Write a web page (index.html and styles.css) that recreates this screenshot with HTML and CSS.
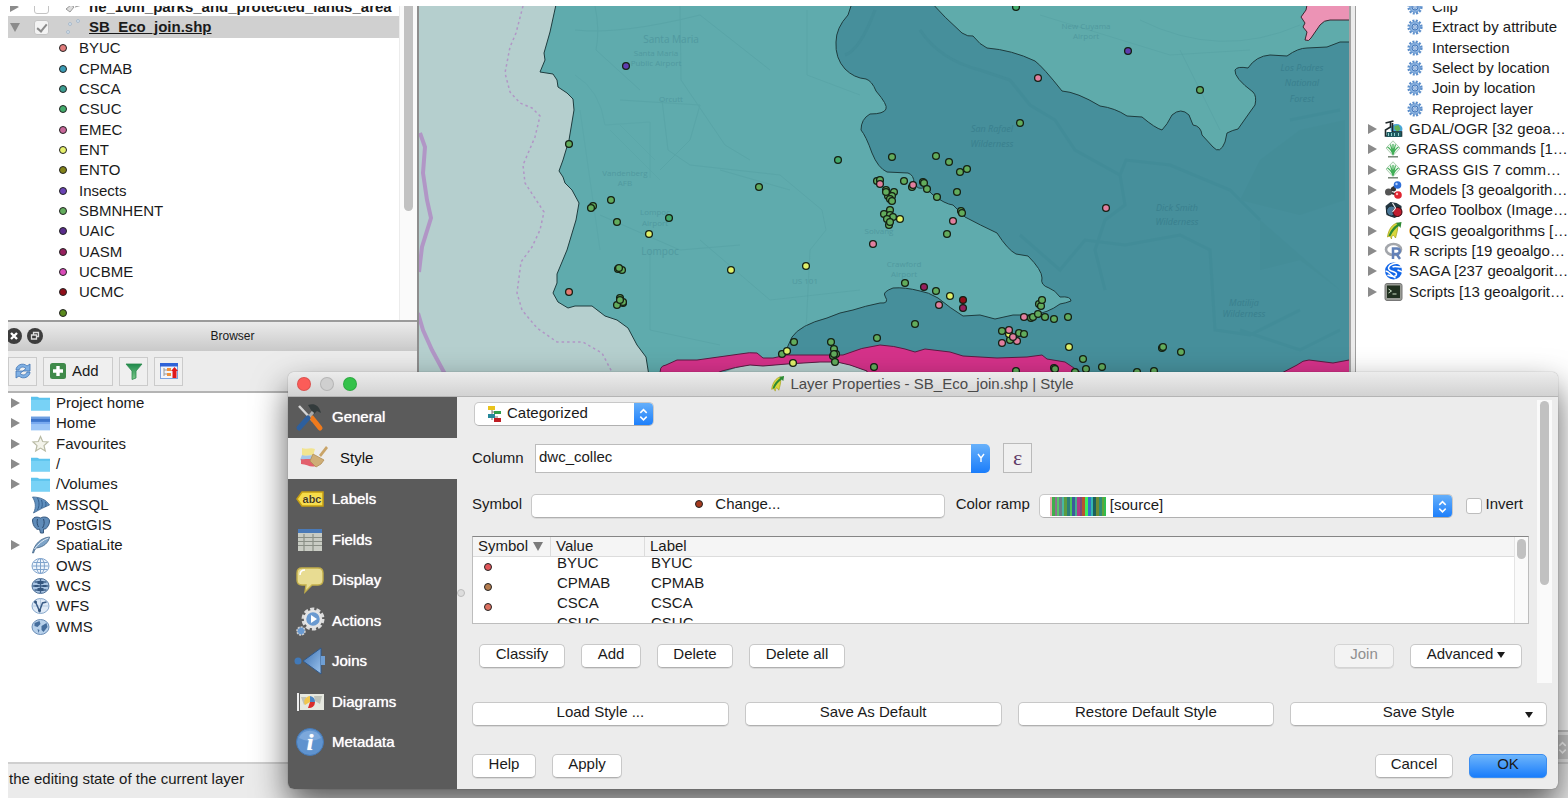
FILE: index.html
```html
<!DOCTYPE html>
<html lang="en">
<head>
<meta charset="utf-8">
<title>QGIS</title>
<link rel="stylesheet" href="styles.css">
</head>
<body>
<svg class="defs" aria-hidden="true">
  <defs>
    <linearGradient id="gGreen" x1="0" y1="0" x2="0" y2="1"><stop offset="0" stop-color="#1f8a4c"/><stop offset="1" stop-color="#7cc88a"/></linearGradient>
    <linearGradient id="gBlue" x1="0" y1="0" x2="1" y2="1"><stop offset="0" stop-color="#3a6fb0"/><stop offset="1" stop-color="#9cc4ee"/></linearGradient>
    <symbol id="folder" viewBox="0 0 18 16"><path d="M0 2h6l2 1h10v12H0z" fill="#5cc3ee"/><path d="M0 5h18v10H0z" fill="#78d2f6"/></symbol>
    <symbol id="gear" viewBox="0 0 16 16"><circle cx="8" cy="8" r="6.4" fill="none" stroke="#5d8fcb" stroke-width="2.400" stroke-dasharray="2 1.350"/><circle cx="8" cy="8" r="5.300" fill="#8db4e0" stroke="#5d8fcb" stroke-width=".8"/><circle cx="8" cy="8" r="3" fill="#b5cfee" stroke="#4577ba"/><circle cx="8" cy="8" r="1.300" fill="#e8f1fb" stroke="#4577ba" stroke-width=".6"/></symbol>
    <symbol id="grass" viewBox="0 0 18 18"><path d="M9 .8l7 7.200-7 7.500-7-7.500z" fill="#f0f8f0" stroke="#a9cdae"/><path d="M9 15V4M9 14.500C8 11 6 8.500 3.500 7M9 14.500c1-3.500 3-6 5.500-7.500M9 13C8 9 7 7 6.500 4.500M9 13c1-4 2-6 2.500-8.500" fill="none" stroke="#3fae55" stroke-width="1.200"/><path d="M4 16.800h10" stroke="#6d7d6d" stroke-width="1.400"/></symbol>
    <symbol id="qgis" viewBox="0 0 18 18"><path d="M13 1C8 2 4 7 3 15c2-1 3-1 4 2 0-4 2-5 4-1 1-4 3-9 2-15z" fill="#d9d63c" stroke="#a9a51f" stroke-width=".8"/><path d="M4 14C6 8 9 5 13 2l-2-1 6-1-1 6-1.500-2C11 6 8 10 6 14z" fill="#2d8a33"/></symbol>
    <symbol id="updown" viewBox="0 0 10 14"><path d="M2 5.500l3-3 3 3M2 9l3 3 3-3" fill="none" stroke="#fff" stroke-width="1.400"/></symbol>
  </defs>
</svg>

<div class="app">
  <div class="main">
    <aside class="left-dock">
      <section class="layers">
        <div class="layers-tree">
          <div class="layer-row layer-row-cut"><span class="arrow"></span><input type="checkbox" class="tick" aria-label="ne_10m_parks_and_protected_lands_area"><svg class="ic18" viewBox="0 0 18 18"><path d="M1 11l5-4 3 2-4 5zM10 9l7-2" fill="#ddd" stroke="#999"/></svg><span class="layer-name">ne_10m_parks_and_protected_lands_area</span></div>
          <div class="layer-row layer-row-on"><span class="arrow arrow-down"></span><input type="checkbox" class="tick" checked aria-label="SB_Eco_join.shp"><svg class="ic18" viewBox="0 0 18 18"><g fill="#d5e0ea" stroke="#9fb4c8" stroke-width=".8"><circle cx="5" cy="6" r="1.500"/><circle cx="13" cy="3" r="1.500"/><circle cx="3" cy="14" r="1.500"/></g></svg><span class="layer-name layer-link">SB_Eco_join.shp</span></div>
          <ul class="legend">
            <li><i class="dot c-byuc"></i>BYUC</li>
            <li><i class="dot c-cpmab"></i>CPMAB</li>
            <li><i class="dot c-csca"></i>CSCA</li>
            <li><i class="dot c-csuc"></i>CSUC</li>
            <li><i class="dot c-emec"></i>EMEC</li>
            <li><i class="dot c-ent"></i>ENT</li>
            <li><i class="dot c-ento"></i>ENTO</li>
            <li><i class="dot c-insects"></i>Insects</li>
            <li><i class="dot c-sbm"></i>SBMNHENT</li>
            <li><i class="dot c-uaic"></i>UAIC</li>
            <li><i class="dot c-uasm"></i>UASM</li>
            <li><i class="dot c-ucbme"></i>UCBME</li>
            <li><i class="dot c-ucmc"></i>UCMC</li>
            <li><i class="dot c-none"></i></li>
          </ul>
        </div>
        <div class="layers-scroll"><span class="layers-thumb"></span></div>
      </section>
      <section class="browser">
        <header class="dock-title">
          <button class="round-btn" aria-label="Close"><svg viewBox="0 0 16 16"><circle cx="8" cy="8" r="8" fill="#3d3d3d"/><path d="M5 5l6 6M11 5l-6 6" stroke="#fff" stroke-width="2.400"/></svg></button>
          <button class="round-btn" aria-label="Float"><svg viewBox="0 0 16 16"><circle cx="8" cy="8" r="8" fill="#3d3d3d"/><path d="M6.500 6.500V4.500h5v4h-2M4.500 7h5v4h-5z" fill="none" stroke="#ddd" stroke-width="1.300"/></svg></button>
          <span class="dock-name">Browser</span>
        </header>
        <div class="toolbar">
          <button class="tool" aria-label="Refresh"><svg class="ic18" viewBox="0 0 18 18"><path d="M2 8C2 3 9 0 13 4l3-2v7H9l3-2.500C9 4 6 5 5 8z" fill="#7fb0e4" stroke="#3f74b4" stroke-width=".8"/><path d="M16 10c0 5-7 8-11 4l-3 2V9h7l-3 2.500c3 2.500 6 1.500 7-1.500z" fill="#7fb0e4" stroke="#3f74b4" stroke-width=".8"/></svg></button>
          <button class="tool tool-add"><svg class="ic18" viewBox="0 0 18 18"><rect x="1" y="1" width="16" height="16" rx="2.500" fill="#3f8a4a"/><path d="M9 4v10M4 9h10" stroke="#fff" stroke-width="3.400"/></svg>Add</button>
          <button class="tool" aria-label="Filter"><svg class="ic18" viewBox="0 0 18 18"><path d="M1 2h16l-6 7v7l-4 1.500V9z" fill="url(#gGreen)" stroke="#2c8a4c" stroke-width=".8"/></svg></button>
          <button class="tool" aria-label="Collapse all"><svg class="ic18" viewBox="0 0 18 18"><rect x=".5" y="1.500" width="17" height="15" fill="#f2f5fb" stroke="#7aa2e0"/><path d="M0 1h18v3.500H0z" fill="#2f63d8"/><path d="M4 6v8M4 8h4M4 12h4" stroke="#999" fill="none"/><path d="M7 6h4v3H7zM7 11h4v3H7z" fill="#f0923a"/><path d="M12.500 16V9H11l3.500-4L18 9h-1.500v7z" fill="#e0181c"/></svg></button>
        </div>
        <div class="browser-tree">
          <ul class="blist">
            <li><span class="arrow"></span><svg class="ic19"><use href="#folder"/></svg>Project home</li>
            <li><span class="arrow"></span><svg class="ic19" viewBox="0 0 18 16"><path d="M0 2h18v13H0z" fill="#9cc6f8"/><path d="M0 2h18v2H0z" fill="#6f9ee0"/><path d="M0 4h18v3H0z" fill="#3c75cc"/><path d="M0 7h18v2H0z" fill="#79aaf0"/></svg>Home</li>
            <li><span class="arrow"></span><svg class="ic19" viewBox="0 0 18 18"><path d="M9 1.500l2.200 5 5.300.4-4 3.700 1.300 5.400L9 13.100 4.200 16l1.300-5.400-4-3.700 5.300-.4z" fill="#f3f3ea" stroke="#b9baa4" stroke-width="1.200"/></svg>Favourites</li>
            <li><span class="arrow"></span><svg class="ic19"><use href="#folder"/></svg>/</li>
            <li><span class="arrow"></span><svg class="ic19"><use href="#folder"/></svg>/Volumes</li>
            <li><span class="arrow arrow-none"></span><svg class="ic19" viewBox="0 0 18 18"><path d="M1 1c8 0 14 3 17 8-5 2-9 4-16 8 3-6 2-11-1-16z" fill="#5f8fbe" stroke="#3f668f" stroke-width=".8"/><path d="M6 2c2 4 2 8 0 12M10 4c1 3 1 6 0 8M14 6c.6 2 .6 3 0 5" stroke="#35608e" fill="none"/></svg>MSSQL</li>
            <li><span class="arrow arrow-none"></span><svg class="ic19" viewBox="0 0 18 18"><path d="M1 4c1-4 6-3 8-2 3-2 9-1 9 3 0 4-2 6-4 8l-2 0v4H9l-1-4c-2 1-3 0-4-1C2 10 1 7 1 4z" fill="#5f8bb8" stroke="#36587f"/><path d="M6 3c-1 4 0 6 1 8M12 3c1 3 1 6-1 9" fill="none" stroke="#2d4c70"/></svg>PostGIS</li>
            <li><span class="arrow"></span><svg class="ic19" viewBox="0 0 18 18"><path d="M1 17C3 8 9 2 18 1c-1 6-6 10-13 11-2 1-2 3-3 5z" fill="#7ea4c8" stroke="#3f6184" stroke-width=".8"/><path d="M3 13C7 8 11 4 17 2" stroke="#dfeaf4" fill="none"/></svg>SpatiaLite</li>
            <li><span class="arrow arrow-none"></span><svg class="ic19" viewBox="0 0 18 18"><g fill="#eef5fc" stroke="#7fa3cc"><ellipse cx="9" cy="9" rx="8.500" ry="7.500"/><ellipse cx="9" cy="9" rx="4" ry="7.500"/><path d="M1 9h16M2 5.500h14M2 12.500h14M9 1.500v15"/></g></svg>OWS</li>
            <li><span class="arrow arrow-none"></span><svg class="ic19" viewBox="0 0 18 18"><ellipse cx="9" cy="9" rx="8.500" ry="7.500" fill="#a9c4e2" stroke="#4d6f96"/><path d="M1 9h16M3 5h12M3 13h12M9 2v14" stroke="#3f618a" stroke-width="1.400" fill="none"/><path d="M6 4h6v3H6zM6 11h6v3H6zM3 8h4v2H3zM11 8h4v2h-4z" fill="#35567e"/></svg>WCS</li>
            <li><span class="arrow arrow-none"></span><svg class="ic19" viewBox="0 0 18 18"><ellipse cx="9" cy="9" rx="8.500" ry="7.500" fill="#dfeaf6" stroke="#86a6ca"/><path d="M1 9h16M9 2v14" stroke="#b5cbe2"/><path d="M4 5l4 9 3-8 4-1" stroke="#3a5c86" stroke-width="1.500" fill="none"/><circle cx="4" cy="5" r="1.500" fill="#35567e"/><circle cx="8" cy="13.500" r="1.500" fill="#35567e"/></svg>WFS</li>
            <li><span class="arrow arrow-none"></span><svg class="ic19" viewBox="0 0 18 18"><ellipse cx="9" cy="9" rx="8.500" ry="7.500" fill="#b7d0ea" stroke="#6a8db6"/><path d="M3 5l5-2 1 3-3 3-3-1zM10 8l5-3 1 4-4 5-2-2zM6 11l2 1-1 3z" fill="#456d9c"/></svg>WMS</li>
          </ul>
        </div>
      </section>
    </aside>

    <div class="map">
      <svg id="map" class="map-svg" viewBox="419 6 930 756" preserveAspectRatio="xMinYMin slice" role="img" aria-label="Map">
        <rect x="419" y="6" width="1400" height="900" fill="#b5cfce"/>
        <g fill="none" stroke="#b196c6">
          <path d="M420 133L425 147 423 173 427 200 431 218 422 247 419 272M418 313L423 330 432 350 446 376" stroke-width="4"/>
          <path d="M523 6L516 33 510 47 505 73 510 92 520 103 532 108 540 116 535 137 523 165 525 183 544 212 540 230 532 247 521 262 517 293 522 310 537 328 557 342 583 342 602 353 614 376" stroke-width="1.500" stroke-dasharray="2.500 3"/>
        </g>
        <path d="M557 0L550 32 544 53 545 60 540 72 553 74 557 80 558 87 567 93 573 99 574 110 569 140 563 160 559 171 563 177 565 183 572 190 579 203 576 220 567 250 557 274 557 283 553 293 558 302 568 308 575 306 592 306 605 316 617 320 628 328 637 345 646 357 649 376H1400V0z" fill="#5fabad" stroke="#1e3c3e"/>
        <path d="M853 0L848 15Q836 28 836 42Q835 58 845 69Q854 78 866 79Q872 81 876 91Q888 105 886 109Q884 114 870 114Q861 119 861 130Q866 136 872 153Q878 168 887 172L908 173Q914 175 914 183 918 191 925 187L933 195Q945 204 953 205L965 217Q980 225 997 233Q1008 250 1016 254L1028 256Q1042 270 1042 278Q1040 285 1049 288Q1055 290 1060 297Q1071 296 1071 301Q1066 303 1060 304Q1048 313 1032 315L1013 315 995 319 980 315 963 316Q950 308 938 298Q928 292 920 291Q905 287 893 288Q882 292 885 296Q890 304 880 303Q865 306 853 310Q840 312 827 318Q800 325 792 337Q786 350 782 360V376H1400V0z" fill="#468f9b" stroke="#1e3c3e"/>
        <path d="M929 0Q945 18 962 33Q968 37 973 36 980 45 987 48Q1012 50 1035 61Q1043 67 1062 91Q1077 92 1100 106 1115 108 1127 116L1142 117Q1155 128 1162 130Q1167 125 1172 115 1181 107 1189 115L1193 125Q1201 126 1202 135L1213 147Q1220 155 1225 142L1227 133Q1233 130 1238 129L1250 112 1255 105Q1257 96 1253 92Q1234 78 1235 70Q1237 66 1248 68Q1256 56 1270 55L1287 56Q1298 48 1307 48L1327 47 1340 42 1400 42V0z" fill="#5fabab" stroke="#1e3c3e"/>
        <path d="M1308 0L1306 10 1301 17 1305 23 1303 27 1307 32 1305 40Q1309 42 1311 38L1320 25Q1324 20 1330 20H1400V0z" fill="#ec93b5" stroke="#3c2630"/>
        <g fill="none" stroke="#4f9a9e" opacity=".35">
          <path d="M595 6Q600 30 596 50L640 90M680 6L681 80 725 145 750 160M575 30Q620 35 700 15L770 70M620 100L700 105 690 140 660 170M600 215L680 250 740 245M662 100L668 150 690 165 780 175 822 210 826 230 810 250 806 330M720 170L790 190M650 250V330L720 345M700 240L770 300 860 290M1140 20Q1220 60 1300 25M1180 50L1220 130M1040 15L1170 55 1250 50M807 10V75L860 95"/>
          <path d="M575 75Q600 90 605 125L650 122V178M580 110L600 250M610 130L660 180M620 125L655 160" opacity=".6"/>
        </g>
        <g fill="none" stroke="#3a8490" stroke-width="3" opacity=".25">
          <path d="M875 10Q860 50 845 55M920 30Q940 60 980 70L1010 80 1030 105 1055 120 1075 150 1120 175 1126 160 1170 165 1230 190 1260 220M1120 175L1125 205 1105 220 1095 250 1105 290M1020 235L1060 270 1085 240 1125 245 1180 235 1210 250 1215 330 1250 335 1300 310M1290 120L1340 110M1240 330L1300 350 1340 330"/>
          <path d="M1240 200L1300 215 1345 200V120L1300 130 1260 160M1260 220V270L1300 260 1340 290" fill="#408a92" stroke="none"/>
        </g>
        <g class="map-text">
          <text x="671" y="43" class="mt-lg">Santa Maria</text><text x="656" y="56">Santa Maria</text><text x="656" y="66">Public Airport</text><text x="671" y="102">Orcutt</text><text x="625" y="176">Vandenberg</text><text x="625" y="186">AFB</text><text x="655" y="215">Lompoc</text><text x="655" y="226">Airport</text><text x="660" y="255" class="mt-lg">Lompoc</text><text x="805" y="284">US 101</text><text x="879" y="234">Solvang</text><text x="904" y="267">Crawford</text><text x="904" y="277">Airport</text><text x="1086" y="29">New Cuyama</text><text x="1086" y="39">Airport</text>
          <g class="mt-dark"><text x="992" y="132">San Rafael</text><text x="992" y="147">Wilderness</text><text x="1177" y="211">Dick Smith</text><text x="1177" y="225">Wilderness</text><text x="1244" y="306">Matilija</text><text x="1244" y="317">Wilderness</text><text x="1302" y="71">Los Padres</text><text x="1302" y="86">National</text><text x="1302" y="102">Forest</text></g>
        </g>
        <path d="M716 376Q735 367 750 365L763 366 787 364 820 362 837 362 850 365 867 371 880 376z" fill="#b5cfce"/>
        <path d="M661 376Q658 366 666 365L677 360 697 360 740 354Q750 352 757 353L763 358 773 358 787 355 843 355Q862 347 880 345 895 346 905 349L915 352 925 349 950 352 963 356 997 358 1027 357 1042 355 1047 359 1065 362 1086 376H867L867 371 850 365 837 362 820 362 787 364 763 366 750 365Q735 367 722 371L710 376z" fill="#d5328a" stroke="#5a1c42"/>
        <path d="M1276 376L1297 365Q1303 360 1309 360L1333 363 1349 360H1400V376z" fill="#d5328a" stroke="#5a1c42"/>
        <g id="points" stroke="#142014" stroke-width="1.300"></g>
      </svg>
    </div>

    <aside class="right-dock">
      <ul class="algs">
        <li class="sub"><svg class="ic16"><use href="#gear"/></svg>Clip</li>
        <li class="sub"><svg class="ic16"><use href="#gear"/></svg>Extract by attribute</li>
        <li class="sub"><svg class="ic16"><use href="#gear"/></svg>Intersection</li>
        <li class="sub"><svg class="ic16"><use href="#gear"/></svg>Select by location</li>
        <li class="sub"><svg class="ic16"><use href="#gear"/></svg>Join by location</li>
        <li class="sub"><svg class="ic16"><use href="#gear"/></svg>Reproject layer</li>
        <li><span class="arrow"></span><svg class="ic19" viewBox="0 0 18 18"><ellipse cx="12" cy="9" rx="6" ry="5" fill="#49a6d8"/><path d="M10 6l4-1 2 4-3 3-3-3z" fill="#62b257"/><path d="M1 3l8-2M6 2v5l-5 3v6h16v-4H8V3" fill="none" stroke="#20282a" stroke-width="1.600"/><path d="M2 12h15v5H2z" fill="#1d5a60"/><path d="M4 13v3M7 13v3M10 13v3M14 13v3" stroke="#8fd0cc"/></svg>GDAL/OGR [32 geoa…</li>
        <li class="narrow"><span class="arrow"></span><svg class="ic18"><use href="#grass"/></svg>GRASS commands [1…</li>
        <li class="narrow"><span class="arrow"></span><svg class="ic18"><use href="#grass"/></svg>GRASS GIS 7 comm…</li>
        <li><span class="arrow"></span><svg class="ic19" viewBox="0 0 18 18"><path d="M4 11l8-7M4 11l9 3" stroke="#333" stroke-width="2"/><circle cx="4" cy="11" r="3.500" fill="#555"/><circle cx="9" cy="8" r="2.500" fill="#333"/><circle cx="13" cy="4" r="3.800" fill="#2f6fd8"/><circle cx="13.500" cy="14" r="3.800" fill="#df2430"/><circle cx="12" cy="3" r="1.200" fill="#b7d3ff"/><circle cx="12.500" cy="13" r="1.200" fill="#ffb8b8"/></svg>Models [3 geoalgorith…</li>
        <li><span class="arrow"></span><svg class="ic19" viewBox="0 0 18 18"><path d="M1 5l5-4 6 1 5 3v9l-7 3-8-3z" fill="#24353f"/><circle cx="7" cy="10" r="5" fill="#4c7898" stroke="#15222a"/><circle cx="13" cy="11" r="4.500" fill="#c01f30" stroke="#38080e"/><path d="M8 2l3 5-3 4" stroke="#eee" fill="none" stroke-width="1.200"/></svg>Orfeo Toolbox (Image…</li>
        <li><span class="arrow"></span><svg class="ic19"><use href="#qgis"/></svg>QGIS geoalgorithms […</li>
        <li><span class="arrow"></span><svg class="ic19" viewBox="0 0 18 18"><ellipse cx="9" cy="7.500" rx="7.500" ry="5.500" fill="none" stroke="#a3a6ab" stroke-width="2.600"/><path d="M8.500 17V6.500h4a2.700 2.700 0 0 1 0 5.500h-4M12 12l3.500 5" fill="none" stroke="#6180b8" stroke-width="2.500"/></svg>R scripts [19 geoalgo…</li>
        <li><span class="arrow"></span><svg class="ic19" viewBox="0 0 18 18"><circle cx="9" cy="9" r="8.500" fill="#1266e8"/><path d="M16 2.500C12 0 5 2 4 6c0 4 8 3 8 6 0 3-5 3-9 1M1 9c4 0 5 5 10 7M8 5c2-1 5 0 9 0M13 8l5 2" fill="none" stroke="#fff" stroke-width="1.500"/></svg>SAGA [237 geoalgorit…</li>
        <li><span class="arrow"></span><svg class="ic19" viewBox="0 0 18 18"><rect x=".5" y=".5" width="17" height="17" rx="2" fill="#9a9c96" stroke="#777"/><rect x="2.500" y="2.500" width="13" height="12.500" fill="#20301f"/><path d="M4 6l3 2-3 2M8 11h4" stroke="#cfe3c8" fill="none"/></svg>Scripts [13 geoalgorit…</li>
      </ul>
      <div class="right-foot"><span class="foot-cap"><svg class="updown"><use href="#updown"/></svg></span></div>
    </aside>
  </div>
  <footer class="status">the editing state of the current layer</footer>

  <div class="dialog" role="dialog" aria-label="Layer Properties">
    <header class="titlebar">
      <span class="lights"><i class="light l-red"></i><i class="light l-grey"></i><i class="light l-green"></i></span>
      <h1 class="title"><svg class="ic16"><use href="#qgis"/></svg>Layer Properties - SB_Eco_join.shp | Style</h1>
    </header>
    <div class="dialog-body">
      <nav class="side">
        <a href="#general"><svg class="ic28" viewBox="0 0 28 28"><path d="M3 3l14 15" stroke="#d6d6d6" stroke-width="2.500"/><path d="M16 15l8 10" stroke="#ef7a1c" stroke-width="5" stroke-linecap="round"/><path d="M12 2c6-2 11 0 13 8l-4-2-3 3-3-4z" fill="#333b3c"/><path d="M17 9L12 15" stroke="#aaa" stroke-width="3"/><path d="M12 15L3 25" stroke="#2d5f9e" stroke-width="5" stroke-linecap="round"/></svg>General</a>
        <a href="#style" class="current"><svg class="ic28" viewBox="0 0 28 28"><path d="M2 4c5 2 8-1 13 1l-2 7c-5-2-8 1-11 0z" fill="#f2e490"/><path d="M2 11c4 2 8-1 12 1l-2 5c-4-1-7 1-12-1z" fill="#a5c6ea"/><path d="M1 15c4 1 7-1 12 1l3 6c-6 2-9-2-15-2z" fill="#e2606c"/><path d="M19 11l7-9 2 2-7 9z" fill="#c9a468"/><path d="M13 10l11 6-3 4-5 3-6-6z" fill="#cfae76" stroke="#b18e56" stroke-width=".8"/></svg>Style</a>
        <a href="#labels"><svg class="ic28" viewBox="0 0 28 28"><path d="M1 14l5-7h21v14H6z" fill="#f6dc48" stroke="#c69f14" stroke-width="1.500"/><text x="16" y="18" class="abc">abc</text></svg>Labels</a>
        <a href="#fields"><svg class="ic28" viewBox="0 0 28 28"><path d="M2 4h24v21H2z" fill="#c9ccc4"/><path d="M2 3h24v4H2z" fill="#4a7ab8"/><path d="M2 11.500h24M2 15.500h24M2 19.500h24M8 8v17M17 8v17" stroke="#8b9087" stroke-width="1.200"/></svg>Fields</a>
        <a href="#display"><svg class="ic28" viewBox="0 0 28 28"><path d="M6 2h16q5 0 5 5v7q0 5-5 5h-6l-7 7 1-7H6q-5 0-5-5V7q0-5 5-5z" fill="#e8dc92" stroke="#c2ae4a" stroke-width="1.400"/><path d="M4 9q0-5 5-5" fill="none" stroke="#fff" stroke-width="1.500"/></svg>Display</a>
        <a href="#actions"><svg class="ic28" viewBox="0 0 28 28"><circle cx="17" cy="12" r="9.500" fill="none" stroke="#dcdcdc" stroke-width="4" stroke-dasharray="3.900 2.070"/><circle cx="17" cy="12" r="8" fill="#6a9ad0" stroke="#e4e4e4" stroke-width="2.500"/><path d="M15 8l6 4-6 4z" fill="#fff"/><circle cx="5" cy="24" r="4" fill="#6a9ad0" stroke="#ccc" stroke-width="1.600" stroke-dasharray="2 1"/></svg>Actions</a>
        <a href="#joins"><svg class="ic28" viewBox="0 0 28 28"><path d="M7 14L25 1v26z" fill="url(#gBlue)" stroke="#2f598c"/><path d="M25 9h4v9h-4z" fill="#6f9fd4"/><circle cx="2" cy="14" r="3.500" fill="#4179b8"/></svg>Joins</a>
        <a href="#diagrams"><svg class="ic28" viewBox="0 0 28 28"><path d="M1 5h2v18H1z" fill="#eee"/><path d="M4 6h24v16H4z" fill="#e6e8e0"/><path d="M5 9h5l2 4-4 4zM18 8h8l-2 8-5-3z" fill="#bfc2b8"/><path d="M14 8a6 6 0 0 0-5 9l5-3z" fill="#f1c64c"/><path d="M14 8a6 6 0 0 1 5 6h-5z" fill="#4b85c4"/><path d="M14 14h5a6 6 0 0 1-7 6z" fill="#d92c2c"/></svg>Diagrams</a>
        <a href="#metadata"><svg class="ic28" viewBox="0 0 28 28"><circle cx="14" cy="14" r="13.500" fill="#5f93cf" stroke="#4679b5"/><path d="M3 10a12 12 0 0 1 22 0q-11 6-22 0z" fill="#8fb6e2" opacity=".6"/><text x="14" y="22" class="info">i</text></svg>Metadata</a>
      </nav>
      <div class="grip"><i></i></div>
      <div class="content">
        <div class="pane">
          <div class="form">
            <div class="row row-renderer">
              <span class="combo combo-renderer"><svg class="ic18 combo-ic" viewBox="0 0 18 18"><path d="M6 5v10M6 7h6M6 12h6" stroke="#777" fill="none"/><path d="M2 1h7v4H2z" fill="#e9c31c"/><path d="M8 6h7v3H8z" fill="#2f9c4c"/><path d="M2 9h7v4H2z" fill="#25889a"/><path d="M8 13h7v4H8z" fill="#bf1d24"/></svg><select aria-label="Renderer"><option>Categorized</option></select><span class="cap"><svg class="updown"><use href="#updown"/></svg></span></span>
            </div>
            <div class="row row-column">
              <label class="lab" for="col">Column</label>
              <span class="edit-combo"><input id="col" type="text" value="dwc_collec"><button class="cap cap-wide" aria-label="Show columns"><svg class="vee" viewBox="0 0 10 10"><path d="M2 1l3 4 3-4M5 5v4" fill="none" stroke="#fff" stroke-width="1.400"/></svg></button></span>
              <button class="eps" aria-label="Expression">ε</button>
            </div>
            <div class="row row-symbol">
              <span class="lab">Symbol</span>
              <button class="btn change"><i class="dot c-change"></i>Change...</button>
              <label class="ramp-lab" for="ramp">Color ramp</label>
              <span class="combo combo-ramp"><span class="ramp"></span><select id="ramp"><option>[source]</option></select><span class="cap"><svg class="updown"><use href="#updown"/></svg></span></span>
              <label class="invert"><input type="checkbox" class="box">Invert</label>
            </div>
            <div class="classes">
              <table class="ctable">
                <thead><tr><th>Symbol <span class="sort"></span></th><th>Value</th><th>Label</th></tr></thead>
                <tbody>
                  <tr><td><i class="dot c-r1"></i></td><td>BYUC</td><td>BYUC</td></tr>
                  <tr><td><i class="dot c-r2"></i></td><td>CPMAB</td><td>CPMAB</td></tr>
                  <tr><td><i class="dot c-r3"></i></td><td>CSCA</td><td>CSCA</td></tr>
                  <tr><td></td><td>CSUC</td><td>CSUC</td></tr>
                </tbody>
              </table>
              <div class="cscroll"><span class="cthumb"></span></div>
            </div>
            <div class="row actions">
              <button class="btn w86">Classify</button><button class="btn w60">Add</button><button class="btn w76">Delete</button><button class="btn w96">Delete all</button>
              <span class="push"></span>
              <button class="btn w60" disabled>Join</button><button class="btn w112">Advanced <span class="tri"></span></button>
            </div>
          </div>
          <div class="pscroll"><span class="pthumb"></span></div>
        </div>
        <div class="style-buttons">
          <button class="btn">Load Style ...</button><button class="btn">Save As Default</button><button class="btn">Restore Default Style</button><button class="btn save">Save Style<span class="tri"></span></button>
        </div>
        <div class="dialog-foot">
          <button class="btn w64">Help</button><button class="btn w70">Apply</button>
          <span class="push"></span>
          <button class="btn w78">Cancel</button><button class="btn w78 ok">OK</button>
        </div>
      </div>
    </div>
  </div>
</div>
<script src="map.js"></script>
</body>
</html>
```
FILE: styles.css
```css
* { box-sizing: border-box; }
body { margin: 0; background: #fff; font: 15px/20px "Liberation Sans", Arial, sans-serif; color: #1a1a1a; }
button, input, select { font: inherit; color: inherit; }
ul { list-style: none; margin: 0; padding: 0; }
.defs { position: absolute; width: 0; height: 0; }

.app { position: relative; margin: 6px 0 4px 8px; height: calc(100vh - 10px); display: flex; flex-direction: column; overflow: hidden; }
.main { flex: 1; min-height: 0; display: grid; grid-template-columns: 411px 1fr 219px; }
.status { height: 36px; padding: 6px 1px; background: #ebebeb; border-top: 2px solid #cfcfcf; line-height: 18px; }

.ic16 { width: 16px; height: 16px; flex: none; }
.ic18 { width: 18px; height: 18px; flex: none; }
.ic19 { width: 19px; height: 18px; flex: none; }
.ic28 { width: 28px; height: 28px; flex: none; overflow: visible; }

.arrow { flex: none; width: 0; height: 0; border: 5px solid transparent; border-left: 9px solid #8b8b8b; border-right: 0; }
.arrow-down { border: 5px solid transparent; border-top: 9px solid #8b8b8b; border-bottom: 0; }
.arrow-none { visibility: hidden; }
.dot { display: inline-block; flex: none; width: 8px; height: 8px; border-radius: 50%; border: 1px solid #222; background: #5fb65f; }
.c-byuc { background: #e07b7b; } .c-cpmab { background: #3a9bb5; } .c-csca { background: #3c9c90; } .c-csuc { background: #43ab6b; }
.c-emec { background: #c8679a; } .c-ent { background: #e6f06c; } .c-ento { background: #83831a; } .c-insects { background: #6a43b4; }
.c-sbm { background: #62ac5c; } .c-uaic { background: #5a2d8c; } .c-uasm { background: #96205e; } .c-ucbme { background: #d94bb8; }
.c-ucmc { background: #900e1a; } .c-none { background: #5a8a1e; } .c-change { background: #a53a1e; }
.c-r1 { background: #e2565a; } .c-r2 { background: #b47c4e; } .c-r3 { background: #dc7060; }

/* left dock */
.left-dock { display: flex; flex-direction: column; min-height: 0; border-right: 2px solid #8e8e8e; background: #fff; }
.layers { display: flex; height: 316px; overflow: hidden; border-bottom: 2px solid #9b9b9b; }
.layers-tree { flex: 1; min-width: 0; margin-top: -9px; }
.layer-row { display: flex; align-items: center; height: 19px; padding-left: 2px; font-weight: bold; }
.layer-row .arrow { margin-right: 15px; }
.layer-row .arrow-down { margin-right: 14px; }
.layer-row-on { height: 22px; background: #d0d0d0; }
.tick { appearance: none; flex: none; width: 15px; height: 15px; margin: 0 16px 0 0; border: 1px solid #c4c4c4; border-radius: 3px; background: #fff; }
.tick:checked { background: #f3f3f3; position: relative; }
.tick:checked::after { content: ""; position: absolute; left: 4px; top: 1px; width: 4px; height: 8px; border: solid #8a8a8a; border-width: 0 2px 2px 0; transform: rotate(40deg); }
.layer-name { margin-left: 6px; white-space: nowrap; }
.layer-link { text-decoration: underline; }
.legend { display: flex; flex-direction: column; height: 285px; }
.legend li { flex: 1; display: flex; align-items: center; gap: 12px; padding-left: 51px; }
.layers-scroll { flex: none; width: 18px; background: #fafafa; border-left: 1px solid #ececec; }
.layers-thumb { display: block; width: 9px; height: 205px; margin-left: 4px; background: #c1c1c1; border-radius: 0 0 5px 5px; }

.browser { flex: 1; display: flex; flex-direction: column; min-height: 0; }
.dock-title { display: flex; align-items: center; gap: 5px; height: 29px; padding-bottom: 2px; background: linear-gradient(#ebebeb, #c9c9c9); font-size: 12px; }
.round-btn { width: 16px; height: 16px; padding: 0; border: 0; background: none; }
.round-btn:first-child { margin-left: -2px; }
.round-btn svg { display: block; width: 16px; height: 16px; }
.dock-name { flex: 1; text-align: center; }
.toolbar { display: flex; align-items: center; gap: 6px; height: 42px; background: #ececec; border-bottom: 2px solid #b4b4b4; }
.tool { display: flex; align-items: center; justify-content: center; width: 29px; height: 29px; padding: 0; border: 1px solid #cbcbcb; background: #efefef; }
.tool-add { width: 70px; gap: 5px; justify-content: flex-start; padding-left: 5px; }
.browser-tree { flex: 1; overflow: hidden; }
.blist { display: flex; flex-direction: column; height: 244px; line-height: 18px; }
.blist li { flex: 1; display: flex; align-items: center; padding: 0 0 0 3px; }
.blist .arrow { margin-right: 11px; }
.blist .ic19 { margin-right: 6px; }

/* map */
.map { min-width: 0; min-height: 0; overflow: hidden; background: #b5cfce; }
.map-svg { display: block; width: 100%; height: 100%; }
.map-text { font: 8px "Open Sans", sans-serif; text-anchor: middle; fill: #3c7f8c; opacity: .4; }
.mt-lg { font-size: 10px; }
.mt-dark { font-size: 9px; font-style: italic; fill: #28697a; }

/* right dock */
.right-dock { display: flex; flex-direction: column; min-height: 0; overflow: hidden; border-left: 2px solid #a2a2a2; background: linear-gradient(90deg, #ececec 4px, #9f9f9f 4px, #9f9f9f 5px, #fff 5px); }
.algs { display: flex; flex-direction: column; flex: none; height: 305px; margin-top: -9px; padding-left: 17px; }
.algs li { flex: 1; display: flex; align-items: center; white-space: nowrap; }
.algs .arrow { margin-right: 7px; }
.algs .ic19 { margin-right: 6px; }
.algs .narrow .ic18 { margin-right: 4px; }
.algs .sub { padding-left: 39px; }
.algs .sub .ic16 { margin-right: 9px; }
.right-foot { display: flex; justify-content: flex-end; margin-top: auto; height: 32px; padding-top: 3px; background: #ececec; border-top: 2px solid #c6c6c6; }
.foot-cap { display: flex; align-items: center; justify-content: center; width: 12px; height: 24px; background: #ccc; }

/* dialog */
.dialog { position: absolute; left: 280px; right: 10px; top: 366px; border-radius: 6px; overflow: hidden; background: #ececec; box-shadow: 0 0 1px rgba(0,0,0,.5), 0 16px 34px rgba(0,0,0,.62); }
.titlebar { display: flex; align-items: center; height: 25px; padding-left: 9px; background: linear-gradient(#ececec, #d2d2d2); border-bottom: 1px solid #b4b4b4; }
.lights { display: flex; gap: 9px; }
.light { width: 14px; height: 14px; border-radius: 50%; border: 1px solid rgba(0,0,0,.12); }
.l-red { background: #fb5c58; } .l-grey { background: #cfcfcf; } .l-green { background: #34c24a; }
.title { flex: 1; display: flex; justify-content: center; align-items: center; gap: 5px; margin: 0 72px 0 0; font-size: 15px; font-weight: normal; color: #4a4a4a; }
.dialog-body { display: flex; }
.side { width: 169px; background: #5b5b5b; }
.side a { display: flex; align-items: center; height: 40px; padding: 0 0 1px 8px; gap: 8px; color: #fff; text-decoration: none; text-shadow: 0 0 1px #fff; }
.side a:nth-child(odd) { height: 41px; }
.side .current { height: 41px; padding-left: 12px; gap: 12px; background: #ececec; color: #111; text-shadow: none; }
.abc { font: bold 11px "Liberation Sans", sans-serif; text-anchor: middle; fill: #4a3c08; }
.info { font: italic bold 24px "Liberation Serif", serif; text-anchor: middle; fill: #fff; }
.grip { display: flex; align-items: center; width: 9px; }
.grip i { width: 8px; height: 8px; border: 1px solid #bbb; border-radius: 50%; background: #ddd; }
.content { flex: 1; min-width: 0; padding: 3px 11px 0 6px; }
.pane { display: flex; margin-right: -5px; }
.form { flex: 1; min-width: 0; padding: 2px 8px 0 0; }
.pscroll { width: 15px; height: 283px; background: #fafafa; }
.pthumb { display: block; width: 9px; height: 184px; margin: 1px 0 0 3px; border-radius: 5px; background: #c1c1c1; }
.row { display: flex; align-items: center; }
.row-renderer { padding-left: 2px; }
.row-column { margin-top: 17px; }
.row-symbol { margin-top: 21px; padding-right: 6px; }
.lab { flex: none; width: 59px; }
.row-column .lab { width: 63px; }
.row-symbol .lab, .ramp-lab, .invert { padding-bottom: 4px; }
.btn { display: inline-flex; align-items: center; justify-content: center; height: 24px; padding: 0 0 4px; background: #fff; border: 1px solid #c8c8c8; border-bottom-color: #b0b0b0; border-radius: 5px; box-shadow: 0 1px 0 rgba(0,0,0,.08); white-space: nowrap; }
.btn:disabled { color: #8f8f8f; background: #f3f3f3; border-color: #d4d4d4; }
.combo { position: relative; display: flex; align-items: center; height: 24px; background: #fff; border: 1px solid #c8c8c8; border-bottom-color: #b0b0b0; border-radius: 5px; overflow: hidden; }
.combo select { appearance: none; flex: 1; min-width: 0; height: 22px; padding: 0 0 4px; border: 0; background: transparent; }
.combo-renderer { width: 180px; }
.combo-ic { margin: 0 3px 0 11px; }
.cap { display: flex; align-items: center; justify-content: center; flex: none; width: 19px; height: 24px; padding: 0; border: 0; background: linear-gradient(#68b1fa, #1a7dfb); }
.updown { width: 11px; height: 15px; }
.combo-ramp { flex: 1; }
.ramp { flex: none; width: 56px; height: 19px; margin: 0 4px 0 10px; background: repeating-linear-gradient(90deg, #e9a9b0 0 2px, #3fae4b 2px 5px, #8f6f8f 5px 7px, #55c768 7px 9px, #6b7d8a 9px 12px, #49b8a2 12px 14px, #5c9c40 14px 17px, #2c7f78 17px 20px, #48c45a 20px 22px, #3c5a9c 22px 25px, #43b08c 25px 27px, #b03a8a 27px 30px, #7b4a7a 30px 32px, #b5562c 32px 35px, #3cf05c 35px 38px, #3272c8 38px 41px, #34b8b0 41px 43px, #1c5f5a 43px 46px, #6c8c34 46px 49px, #2f8c78 49px 52px, #5fa33c 52px 54px, #2fbf4f 54px 56px); }
.invert { display: flex; align-items: center; gap: 4px; margin-left: 13px; }
.box { appearance: none; width: 16px; height: 16px; margin: 4px 0 0; border: 1px solid #bdbdbd; border-radius: 3px; background: #fff; }
.ramp-lab { margin: 0 9px 0 11px; }
.change { flex: 1; gap: 12px; }
.edit-combo { display: flex; width: 455px; height: 29px; border-radius: 0 5px 5px 0; overflow: hidden; }
.edit-combo input { flex: 1; min-width: 0; padding: 0 3px 2px; border: 1px solid #bcbcbc; border-right: 0; background: #fff; }
.cap-wide { height: 29px; }
.vee { width: 10px; height: 10px; }
.eps { width: 29px; height: 30px; margin-left: 13px; padding: 0; border: 1px solid #bababa; background: #f0f0f0; color: #5f3a66; font: 22px/26px "Liberation Serif", serif; }

.classes { display: flex; height: 88px; margin-top: 18px; overflow: hidden; background: #fff; border: 1px solid #bdbdbd; border-top-color: #858585; }
.ctable { flex: 1; display: block; border-collapse: collapse; line-height: 14px; }
.ctable thead, .ctable tbody { display: block; }
.ctable tr { display: grid; grid-template-columns: 78px 94px 1fr; }
.ctable thead { height: 20px; background: #f5f5f5; border-bottom: 1px solid #dcdcdc; }
.ctable th { padding: 2px 0 3px 5px; font-weight: normal; text-align: left; border-right: 1px solid #dcdcdc; white-space: nowrap; }
.ctable th:last-child { border-right: 0; }
.ctable td { height: 20px; padding: 0 0 0 6px; line-height: 12px; }
.ctable td:first-child { padding: 3px 0 0 11px; }
.sort { display: inline-block; margin-left: 1px; border: 5px solid transparent; border-top: 9px solid #7b7b7b; border-bottom: 0; }
.cscroll { width: 14px; background: #fafafa; border-left: 1px solid #e4e4e4; }
.cthumb { display: block; width: 9px; height: 20px; margin: 2px 0 0 2px; border-radius: 5px; background: #c1c1c1; }
.actions { margin-top: 20px; padding: 0 7px; gap: 16px; }
.push { flex: 1; }
.w60 { width: 60px; } .w64 { width: 64px; } .w70 { width: 70px; } .w76 { width: 76px; } .w78 { width: 78px; } .w86 { width: 86px; } .w96 { width: 96px; } .w112 { width: 112px; }
.tri { display: inline-block; margin: 2px 0 0 4px; border: 4px solid transparent; border-top: 6px solid #1a1a1a; border-bottom: 0; }
.style-buttons { display: grid; grid-template-columns: repeat(4, 1fr); gap: 16px; margin-top: 19px; }
.save { position: relative; }
.save .tri { position: absolute; right: 13px; top: 7px; }
.dialog-foot { display: flex; gap: 16px; margin-top: 28px; padding-bottom: 11px; }
.ok { background: linear-gradient(#6db5fb, #1a7dfb); border-color: #3b8df0; }
```
FILE: map.js
```js
const layers = [
  ['#62ac5c', '569,144 611,200 593,206 591,208 617,222 618,269 622,270 619,268 620,298 623,303 623,302 617,305 620,300 759,187 892,157 936,156 949,162 960,172 967,169 957,192 877,181 880,180 904,181 912,187 923,182 924,183 927,189 937,197 961,211 962,213 947,234 886,190 894,192 888,196 892,196 890,199 886,192 892,201 890,210 884,214 890,215 893,217 887,219 889,225 890,222 905,283 936,291 915,324 877,338 794,342 782,354 831,342 834,349 836,354 833,356 834,354 835,362 874,367 1016,371 1031,318 1033,317 1038,314 1045,317 1039,304 1041,306 1042,300 1002,331 1010,340 1019,333 1024,334 1200,90 1020,123 1054,319 1068,317 1083,359 1102,367 1054,368 1055,369 1075,372 1086,369 1137,372 1154,371 1162,348 1163,347 1181,352'],
  ['#43ab6b', '669,218 838,160 1016,7'],
  ['#dff06a', '649,234 731,270 900,219 806,266 950,296 787,351 793,363 1009,334 1069,347'],
  ['#e27f9f', '880,184 913,185 953,221 873,244 939,305 1024,317 1009,330 1017,341 1013,337 1002,343 1038,78 1106,208'],
  ['#e57a72', '569,292'],
  ['#5f3db0', '626,66 1128,51'],
  ['#96205e', '924,287 963,308'],
  ['#900e1a', '963,300']
];
const group = document.getElementById('points');
for (const [fill, list] of layers) {
  for (const pair of list.split(' ')) {
    const [cx, cy] = pair.split(',');
    const c = document.createElementNS('http://www.w3.org/2000/svg', 'circle');
    c.setAttribute('cx', cx);
    c.setAttribute('cy', cy);
    c.setAttribute('r', 3.4);
    c.setAttribute('fill', fill);
    group.appendChild(c);
  }
}
```
